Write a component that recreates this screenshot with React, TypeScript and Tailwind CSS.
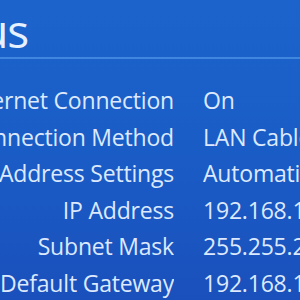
const rows: [string, string][] = [
  ['Internet Connection', 'On'],
  ['Connection Method', 'LAN Cable'],
  ['IP Address Settings', 'Automatic'],
  ['IP Address', '192.168.1.2'],
  ['Subnet Mask', '255.255.255.0'],
  ['Default Gateway', '192.168.1.1'],
];

export default function App() {
  return (
    <div
      className="w-[300px] h-[300px] overflow-hidden bg-gradient-to-b from-[#1c64cc] via-[#1a5cc6] to-[#1a50bc] text-[#dce9ff]"
      style={{ fontFamily: '"Open Sans", "Noto Sans", sans-serif' }}
    >
      <header className="h-[57px] flex items-end">
        <div className="w-[28px] flex justify-end whitespace-nowrap">
          <h1 className="text-[46px] leading-none tracking-tight pb-[4px] text-[#e6f0ff]">View Connection Status</h1>
        </div>
      </header>
      <div className="h-[2px] bg-[#3f86de]" />
      <div className="grid grid-cols-[174px_1fr] gap-x-[29px] pt-[23px] text-[23px] leading-[36.5px] tracking-[-0.2px] whitespace-nowrap">
        {rows.map(([label, value]) => (
          <div key={label} className="contents">
            <div className="flex justify-end overflow-hidden">
              <span>{label}</span>
            </div>
            <div className="overflow-hidden">{value}</div>
          </div>
        ))}
      </div>
    </div>
  );
}
